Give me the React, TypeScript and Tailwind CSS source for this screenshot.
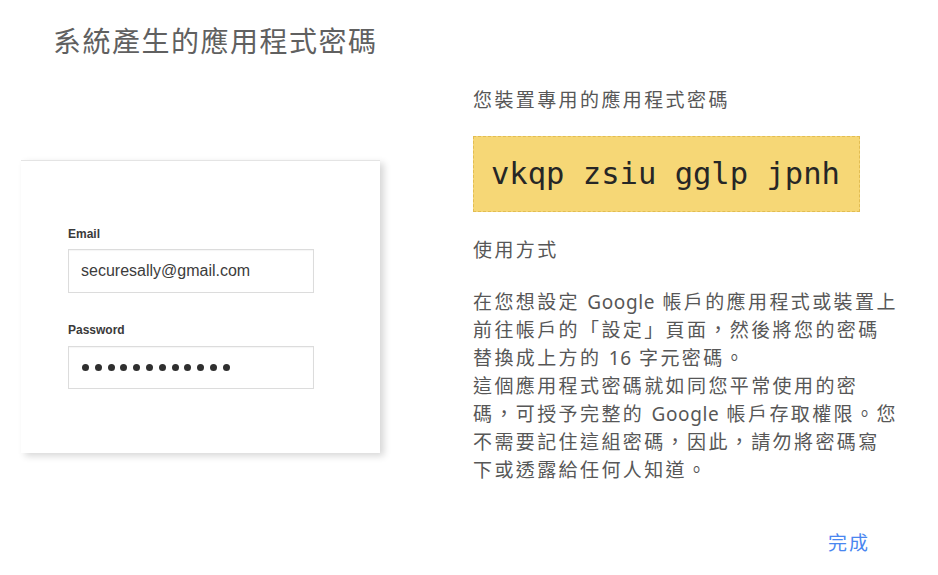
const cjk = { fontFamily: '"Noto Sans", "Noto Sans CJK TC", sans-serif' };

// Latin words inside the CJK text keep a tighter spacing, as in the picture
const L = ({ children }: { children: string }) => <span className="tracking-[0.6px]">{children}</span>;

const lines = [
  <>在您想設定 <L>Google</L> 帳戶的應用程式或裝置上</>,
  <>前往帳戶的「設定」頁面，然後將您的密碼</>,
  <>替換成上方的 <L>16</L> 字元密碼。</>,
  <>這個應用程式密碼就如同您平常使用的密</>,
  <>碼，可授予完整的 <L>Google</L> 帳戶存取權限。您</>,
  <>不需要記住這組密碼，因此，請勿將密碼寫</>,
  <>下或透露給任何人知道。</>,
];

function SignInCard() {
  return (
    <div
      className="ml-[21px] mt-[101px] h-[293px] w-[359px] border-t border-[#e4e4e4] bg-white pl-[47px] pt-[66px] shadow-[4px_3px_7px_rgba(0,0,0,0.16)]"
      style={{ fontFamily: '"Liberation Sans", Arial, sans-serif' }}
    >
      <div className="text-[12px] font-bold leading-[14px] text-[#3a3a3a]">Email</div>
      <div className="mt-[8px] flex h-[44px] w-[246px] items-center border border-[#dcdcdc] pl-[12px] text-[16px] text-[#3c3c3c] shadow-[inset_0_1px_1px_rgba(0,0,0,0.04)]">
        securesally@gmail.com
      </div>
      <div className="mt-[30px] text-[12px] font-bold leading-[14px] text-[#3a3a3a]">Password</div>
      <div className="mt-[9px] flex h-[43px] w-[246px] items-center gap-[5.8px] border border-[#dcdcdc] pl-[13px] shadow-[inset_0_1px_1px_rgba(0,0,0,0.04)]">
        {Array.from({ length: 12 }).map((_, i) => (
          <span key={i} className="h-[7px] w-[7px] rounded-full bg-[#2f2f2f]" />
        ))}
      </div>
    </div>
  );
}

export default function App() {
  return (
    <div className="flex h-[575px] w-[938px] overflow-hidden bg-white" style={cjk}>
      <div className="w-[380px] shrink-0">
        <h1 className="pl-[53px] pt-[23px] text-[28px] font-normal leading-[36px] tracking-[1.5px] text-[#606060]">
          系統產生的應用程式密碼
        </h1>
        <SignInCard />
      </div>

      <div className="ml-[93px] w-[440px] pt-[86px] text-[19px] leading-[28px] tracking-[2.4px] text-[#575757]">
        <div>您裝置專用的應用程式密碼</div>
        <div className="mt-[22px] flex h-[76px] w-[387px] items-center border border-dashed border-[#e2bd52] bg-[#f6d776] pl-[17px]">
          <span
            className="text-[30.5px] tracking-normal text-[#262626]"
            style={{ fontFamily: '"DejaVu Sans Mono", "Liberation Mono", monospace' }}
          >
            vkqp zsiu gglp jpnh
          </span>
        </div>
        <div className="mt-[24px]">使用方式</div>
        <p className="mt-[24px]">
          {lines.map((l, i) => (
            <span key={i} className="block whitespace-nowrap">
              {l}
            </span>
          ))}
        </p>
        <div className="mt-[45px] flex w-[397px] justify-end">
          <button className="tracking-[2px] text-[#4a86f0]">完成</button>
        </div>
      </div>
    </div>
  );
}
